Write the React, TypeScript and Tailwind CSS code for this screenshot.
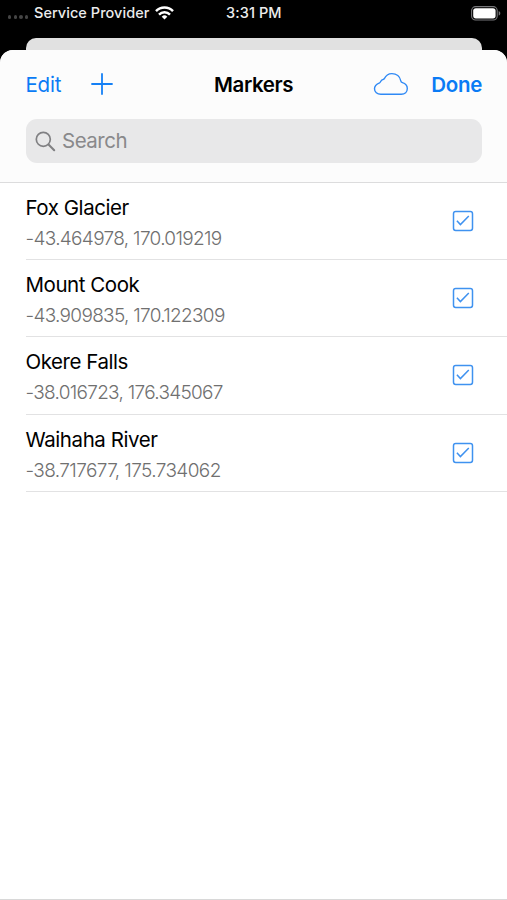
type Marker = {
  name: string
  position: string
  nameClass: string
  positionClass: string
}

const markers: Marker[] = [
  { name: 'Fox Glacier', position: '-43.464978, 170.019219', nameClass: 'tracking-[-0.45px]', positionClass: 'tracking-[-0.67px]' },
  { name: 'Mount Cook', position: '-43.909835, 170.122309', nameClass: 'tracking-[-0.45px]', positionClass: 'tracking-[-0.69px]' },
  { name: 'Okere Falls', position: '-38.016723, 176.345067', nameClass: 'tracking-[-0.45px]', positionClass: 'tracking-[-0.7px]' },
  { name: 'Waihaha River', position: '-38.717677, 175.734062', nameClass: 'tracking-[-0.42px]', positionClass: 'tracking-[-0.6px]' },
]

function WifiIcon() {
  return (
    <svg width="19" height="14" viewBox="0 0 19 14" fill="none" stroke="#fff" strokeWidth="2.5">
      <path d="M1 5.1a12 12 0 0 1 17 0" />
      <path d="M4 8.6a7.8 7.8 0 0 1 11 0" />
      <path d="M9.5 13.6l-2.8-2.9a4 4 0 0 1 5.6 0z" fill="#fff" stroke="none" />
    </svg>
  )
}

function BatteryIcon() {
  return (
    <svg width="30" height="15" viewBox="0 0 30 15" fill="none">
      <rect x="0.6" y="0.6" width="25.6" height="13.4" rx="4" stroke="#77777a" strokeWidth="1.1" />
      <rect x="2.2" y="2.2" width="22.4" height="10.2" rx="2.6" fill="#fff" />
      <path d="M27.7 5v4.6c1-.4 1.6-1.3 1.6-2.3s-.6-1.9-1.6-2.3z" fill="#77777a" />
    </svg>
  )
}

function CloudIcon() {
  return (
    <svg width="36" height="24" viewBox="0 0 36 24" fill="none" stroke="#2f89f5" strokeWidth="1.4">
      <path d="M7.8 22.3C4.2 22.3 1.5 20 1.5 16.8C1.5 14.2 3.4 12 6.6 10.8C7.6 10.4 7.6 9 8.6 8.2C9.5 7.5 10.5 7.6 11.3 6.8C12.8 3.4 15.6 1.6 18.9 1.6C23.5 1.6 27 4.6 27.8 8.8C28 10 28.3 10.3 29.4 10.6C32.6 11.5 34.3 13.6 34.3 16.5C34.3 19.9 31.8 22.3 28.3 22.3Z" />
    </svg>
  )
}

function CheckboxIcon() {
  return (
    <svg width="22" height="22" viewBox="0 0 22 22" fill="none" stroke="#3f92f0">
      <rect x="1.5" y="1.5" width="19" height="19" rx="2.2" strokeWidth="1.5" />
      <path d="M4.9 10.8l3.5 3.8 8.4-8.6" strokeWidth="1.5" />
    </svg>
  )
}

function StatusBar() {
  return (
    <div className="flex h-[38px] items-start text-[14.5px] leading-[26px] font-medium text-[#ececec]">
      <div className="flex w-[226px] items-center pl-2">
        <div className="mt-[8px] flex w-[26px] gap-[2.5px]">
          <span className="size-[3.2px] rounded-full bg-[#454545]" />
          <span className="size-[3.2px] rounded-full bg-[#454545]" />
          <span className="size-[3.2px] rounded-full bg-[#454545]" />
          <span className="size-[3.2px] rounded-full bg-[#454545]" />
        </div>
        <span className="w-[121px] whitespace-nowrap tracking-[0.05px]">Service Provider</span>
        <WifiIcon />
      </div>
      <span className="whitespace-nowrap tracking-[0.1px]">3:31 PM</span>
      <div className="mt-[6px] mr-[6px] ml-auto">
        <BatteryIcon />
      </div>
    </div>
  )
}

function MarkerRow({ marker }: { marker: Marker }) {
  return (
    <li className="ml-[25.5px] flex h-[77.4px] items-center justify-between border-b border-[#e2e2e3] pr-[33px]">
      <div className="pt-[4px] whitespace-nowrap">
        <p className={`text-[20.5px] leading-[31px] text-black ${marker.nameClass}`}>{marker.name}</p>
        <p className={`text-[19px] leading-[31px] font-light text-[#707070] ${marker.positionClass}`}>{marker.position}</p>
      </div>
      <CheckboxIcon />
    </li>
  )
}

export default function App() {
  return (
    <div className="flex h-[900px] w-[507px] flex-col overflow-hidden bg-black font-['Inter',sans-serif]">
      <StatusBar />
      <div className="mr-[25px] ml-[26px] h-3 shrink-0 rounded-t-[10px] bg-[#e1e1e1]" />

      <main className="flex flex-1 flex-col rounded-t-[13px] bg-white">
        <header className="h-[132.5px] shrink-0 rounded-t-[13px] border-b border-[#dcdcdd] bg-[#fcfcfc] pr-[25px] pl-[25.5px]">
          <div className="flex h-[69.4px] items-center text-[20.5px] text-[#0a7bf5]">
            <button className="w-[65px] pt-px text-left tracking-[-0.2px]">Edit</button>
            <button aria-label="Add marker" className="-mt-px">
              <svg width="22" height="22" viewBox="0 0 22 22" stroke="#1580f5" strokeWidth="1.8" strokeLinecap="round">
                <path d="M11 1v20M1 11h20" />
              </svg>
            </button>
            <h1 className="ml-[101.5px] w-[159px] pt-px font-semibold tracking-[-0.4px] whitespace-nowrap text-black">Markers</h1>
            <button aria-label="Sync" className="-mt-px">
              <CloudIcon />
            </button>
            <button className="ml-auto pt-px font-semibold tracking-[-0.3px]">Done</button>
          </div>
          <div className="flex h-[44px] items-center rounded-[11px] bg-[#e8e8e9] pl-[9px] text-[#89898b]">
            <svg width="21" height="21" viewBox="0 0 21 21" fill="none" stroke="#808083" strokeWidth="1.7" strokeLinecap="round">
              <circle cx="8.3" cy="8.3" r="7" />
              <path d="M13.5 13.5l5.7 5.7" strokeWidth="2.1" />
            </svg>
            <span className="ml-[6.5px] text-[20.5px] tracking-[-0.5px]">Search</span>
          </div>
        </header>

        <ul>
          {markers.map((marker) => (
            <MarkerRow key={marker.name} marker={marker} />
          ))}
        </ul>

        <div className="mt-auto h-px bg-[#d8d8d8]" />
      </main>
    </div>
  )
}
